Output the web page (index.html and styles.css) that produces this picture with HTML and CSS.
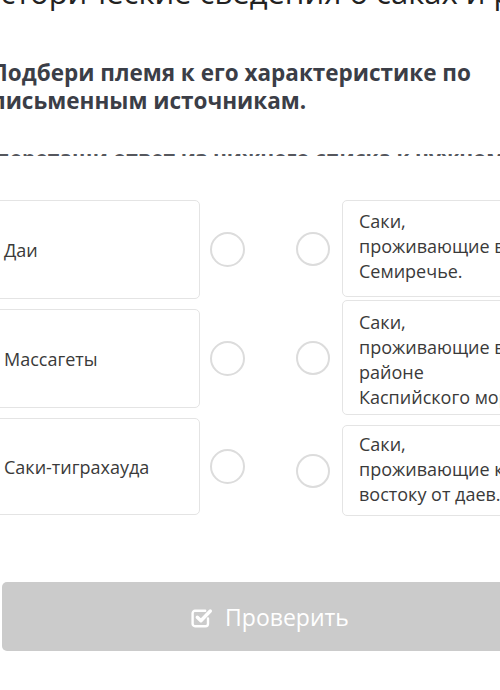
FILE: index.html
```html
<!DOCTYPE html>
<html lang="ru">
<head>
    <meta charset="UTF-8">
    <meta name="viewport" content="width=device-width, initial-scale=1.0">
    <title>Подбери племя</title>
    <link rel="stylesheet" href="styles.css">
</head>
<body>
    <div class="page">
        <p class="intro">Исторические сведения о саках и родственных племенах</p>
        <h1 class="task">Подбери племя к его характеристике по письменным источникам.</h1>
        <div class="slice"><span>перетащи ответ из нижнего списка к нужному месту  перетащи ответ из нижнего списка к нужному</span></div>

        <div class="board">
            <div class="column">
                <div class="row">
                    <div class="card card-left">Даи</div>
                    <span class="dot"></span>
                </div>
                <div class="row">
                    <div class="card card-left">Массагеты</div>
                    <span class="dot"></span>
                </div>
                <div class="row">
                    <div class="card card-left card-last">Саки-тиграхауда</div>
                    <span class="dot"></span>
                </div>
            </div>
            <div class="column column-right">
                <div class="row">
                    <span class="dot dot-right"></span>
                    <div class="card card-right card-a">Саки,<br>проживающие в<br>Семиречье.</div>
                </div>
                <div class="row">
                    <span class="dot dot-right"></span>
                    <div class="card card-right card-b">Саки,<br>проживающие в<br>районе<br>Каспийского моря.</div>
                </div>
                <div class="row">
                    <span class="dot dot-right"></span>
                    <div class="card card-right card-c">Саки,<br>проживающие к<br>востоку от даев.</div>
                </div>
            </div>
        </div>

        <button class="check-btn" type="button">
            <svg class="check-icon" width="22" height="21" viewBox="0 0 22 21">
                <path d="M17 11.5v5.3a2.4 2.4 0 0 1-2.4 2.4H4a2.4 2.4 0 0 1-2.4-2.4V6.2A2.4 2.4 0 0 1 4 3.8h10.2" fill="none" stroke="#fff" stroke-width="2.4" stroke-linecap="round"/>
                <path d="M6.3 10.2l3.6 3.6 9.4-9.8" fill="none" stroke="#fff" stroke-width="3.4" stroke-linecap="round" stroke-linejoin="round"/>
            </svg>
            Проверить
        </button>
    </div>
</body>
</html>
```

FILE: styles.css
```css
body {
    margin: 0;
    padding: 0;
    background-color: #fff;
    font-family: 'Open Sans', 'Noto Sans', sans-serif;
    overflow: hidden;
}
.page {
    width: 560px;
}
.intro {
    margin: -28px 0 0 -23px;
    padding-bottom: 3px;
    font-size: 31px;
    line-height: 40px;
    color: #222;
    white-space: nowrap;
}
.task {
    margin: 44px 0 0 -9px;
    width: 510px;
    font-size: 22.5px;
    line-height: 28px;
    font-weight: bold;
    color: #3b3e47;
}
.slice {
    margin: 39px 0 0 -4px;
    height: 2px;
    overflow: hidden;
    white-space: nowrap;
}
.slice span {
    display: block;
    margin-top: -10px;
    font-size: 21px;
    line-height: 28px;
    font-weight: bold;
    color: #55575d;
}
.board {
    display: flex;
    align-items: flex-start;
    margin: 44px 0 0 -5px;
}
.column {
    display: flex;
    flex-direction: column;
    gap: 10px;
}
.column-right {
    margin-left: 51px;
}
.column-right .row + .row {
    margin-top: -7px;
}
.column-right .row:last-child {
    margin-top: 0;
}
.row {
    display: flex;
    align-items: center;
}
.card {
    box-sizing: border-box;
    border: 1px solid #e4e4e4;
    border-radius: 5px;
    background-color: #fff;
    color: #3a3a3a;
    font-size: 18px;
}
.card-left {
    width: 205px;
    height: 99px;
    padding: 0 8px;
    display: flex;
    align-items: center;
}
.card-last {
    height: 97px;
}
.card-right {
    width: 200px;
    margin-left: 12px;
    padding: 9px 16px;
    line-height: 25px;
    white-space: nowrap;
}
.card-a {
    height: 97px;
    padding-top: 8px;
}
.card-b {
    height: 115px;
}
.card-c {
    height: 91px;
    padding-top: 6px;
}
.dot {
    box-sizing: border-box;
    width: 35px;
    height: 35px;
    margin-left: 10px;
    border: 2px solid #dcdcdc;
    border-radius: 50%;
}
.dot-right {
    width: 34px;
    height: 34px;
    margin-left: 0;
}
.check-btn {
    display: flex;
    align-items: center;
    justify-content: center;
    gap: 12px;
    margin: 66px 0 0 2px;
    width: 536px;
    height: 69px;
    border: none;
    border-radius: 5px;
    background-color: #cbcbcb;
    color: #fff;
    font-family: 'Open Sans', 'Noto Sans', sans-serif;
    font-size: 23px;
    padding: 0;
}
.check-icon {
    margin-top: 1px;
}
```
